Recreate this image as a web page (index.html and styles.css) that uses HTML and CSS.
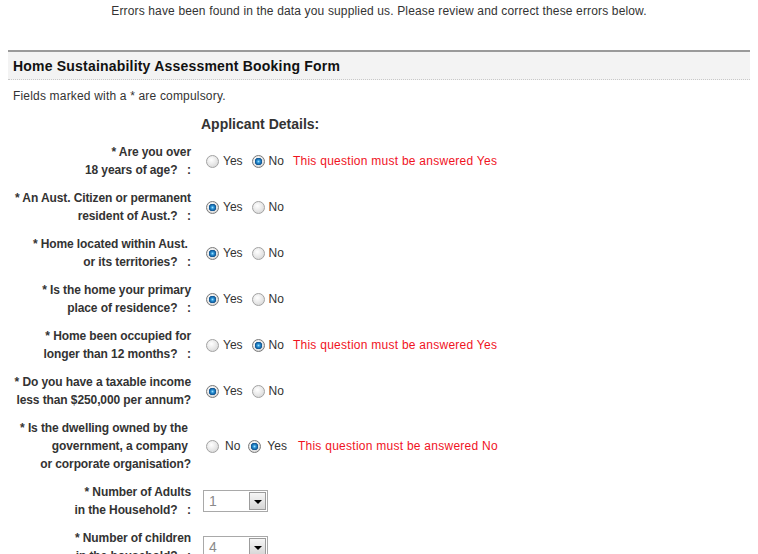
FILE: index.html
```html
<!DOCTYPE html>
<html>
<head>
<meta charset="utf-8">
<link rel="stylesheet" href="styles.css">
</head>
<body>
<p class="summary">Errors have been found in the data you supplied us. Please review and correct these errors below.</p>
<div class="page">
  <h1 class="form-title">Home Sustainability Assessment Booking Form</h1>
  <p class="note">Fields marked with a * are compulsory.</p>
  <div class="form-grid">
    <div class="label"></div>
    <h2 class="section">Applicant Details:</h2>

    <div class="label">* Are you over<br>18 years of age?&nbsp;&nbsp; :</div>
    <div class="field">
      <label class="opt"><input type="radio" class="radio" name="q1">Yes</label>
      <label class="opt"><input type="radio" class="radio" name="q1" checked>No</label>
      <span class="err">This question must be answered Yes</span>
    </div>

    <div class="label">* An Aust. Citizen or permanent<br>resident of Aust.?&nbsp;&nbsp; :</div>
    <div class="field">
      <label class="opt"><input type="radio" class="radio" name="q2" checked>Yes</label>
      <label class="opt"><input type="radio" class="radio" name="q2">No</label>
    </div>

    <div class="label">* Home located within Aust.&nbsp;<br>or its territories?&nbsp;&nbsp; :</div>
    <div class="field">
      <label class="opt"><input type="radio" class="radio" name="q3" checked>Yes</label>
      <label class="opt"><input type="radio" class="radio" name="q3">No</label>
    </div>

    <div class="label">* Is the home your primary<br>place of residence?&nbsp;&nbsp; :</div>
    <div class="field">
      <label class="opt"><input type="radio" class="radio" name="q4" checked>Yes</label>
      <label class="opt"><input type="radio" class="radio" name="q4">No</label>
    </div>

    <div class="label">* Home been occupied for<br>longer than 12 months?&nbsp;&nbsp; :</div>
    <div class="field">
      <label class="opt"><input type="radio" class="radio" name="q5">Yes</label>
      <label class="opt"><input type="radio" class="radio" name="q5" checked>No</label>
      <span class="err">This question must be answered Yes</span>
    </div>

    <div class="label">* Do you have a taxable income<br>less than $250,000 per annum?</div>
    <div class="field">
      <label class="opt"><input type="radio" class="radio" name="q6" checked>Yes</label>
      <label class="opt"><input type="radio" class="radio" name="q6">No</label>
    </div>

    <div class="label">* Is the dwelling owned by the&nbsp;<br>government, a company&nbsp;<br>or corporate organisation?</div>
    <div class="field wide">
      <label class="opt"><input type="radio" class="radio" name="q7">No</label>
      <label class="opt"><input type="radio" class="radio" name="q7" checked>Yes</label>
      <span class="err">This question must be answered No</span>
    </div>

    <div class="label">* Number of Adults<br>in the Household?&nbsp;&nbsp; :</div>
    <div class="field">
      <div class="select"><span class="value">1</span><span class="btn"><span class="tri"></span></span></div>
    </div>

    <div class="label">* Number of children<br>in the household?&nbsp;&nbsp; :</div>
    <div class="field">
      <div class="select"><span class="value">4</span><span class="btn"><span class="tri"></span></span></div>
    </div>
  </div>
</div>
</body>
</html>
```

FILE: styles.css
```css
body {
  margin: 0;
  font-family: "Liberation Sans", Arial, sans-serif;
  font-size: 12px;
  color: #333;
  background: #fff;
}

.summary {
  margin: 4px 0 0;
  line-height: 14px;
  text-align: center;
  color: #333;
  letter-spacing: 0.15px;
}

.page {
  margin: 32px 8px 0;
  width: 742px;
}

.form-title {
  margin: 0;
  border-top: 2px solid #9a9a9a;
  border-bottom: 1px dotted #c8c8c8;
  background: #f3f3f3;
  height: 27px;
  line-height: 28px;
  padding-left: 5px;
  font-size: 14px;
  letter-spacing: 0.2px;
  font-weight: bold;
  color: #111;
}

.note {
  margin: 7px 0 0 5px;
  line-height: 18px;
  color: #333;
  letter-spacing: 0.18px;
}

.form-grid {
  display: grid;
  grid-template-columns: 187px 1fr;
  row-gap: 10px;
  margin-top: 10px;
}

.section {
  margin: 0 0 0 6px;
  font-size: 14px;
  line-height: 18px;
  font-weight: bold;
  color: #333;
}

.label {
  text-align: right;
  padding-right: 4px;
  font-weight: bold;
  line-height: 18px;
  color: #333;
  white-space: nowrap;
  letter-spacing: -0.1px;
}

.field {
  display: flex;
  align-items: center;
  padding-left: 8px;
  gap: 9px;
}

.field.wide {
  gap: 8px;
}

.field.wide .opt {
  gap: 6px;
}

.field.wide .err {
  margin-left: 3px;
}

.opt {
  display: flex;
  align-items: center;
  gap: 4px;
  color: #333;
}

.opt:first-child {
  margin-left: 3px;
}

.radio {
  appearance: none;
  -webkit-appearance: none;
  width: 13px;
  height: 13px;
  margin: 0;
  border-radius: 50%;
  border: 1px solid #a2a2a2;
  background: radial-gradient(circle at 40% 35%, #ffffff 0, #e6e6e6 55%, #cfcfcf 100%);
  box-sizing: border-box;
}

.radio:checked {
  border-color: #7a7a7a;
  background:
    radial-gradient(circle at 50% 50%, #9fe0ff 0, #2b93d6 1.5px, #0d4f8c 3.5px, rgba(13,79,140,0) 4px),
    radial-gradient(circle at 40% 35%, #ffffff 0, #e2e2e2 60%, #c8c8c8 100%);
}

.err {
  color: #f0131e;
  letter-spacing: 0.26px;
}

.select {
  display: flex;
  width: 65px;
  height: 22px;
  box-sizing: border-box;
  border: 1px solid #a9a9a9;
  background: #fff;
}

.value {
  flex: 1;
  padding-left: 5px;
  font-size: 14px;
  line-height: 20px;
  color: #8a8a8a;
}

.btn {
  width: 15px;
  margin: 1px;
  border: 1px solid #9c9c9c;
  background: linear-gradient(#f6f6f6, #d6d6d6);
  display: flex;
  align-items: center;
  justify-content: center;
}

.tri {
  width: 0;
  height: 0;
  border-left: 4px solid transparent;
  border-right: 4px solid transparent;
  border-top: 4px solid #000;
  margin-top: 1px;
}
```
